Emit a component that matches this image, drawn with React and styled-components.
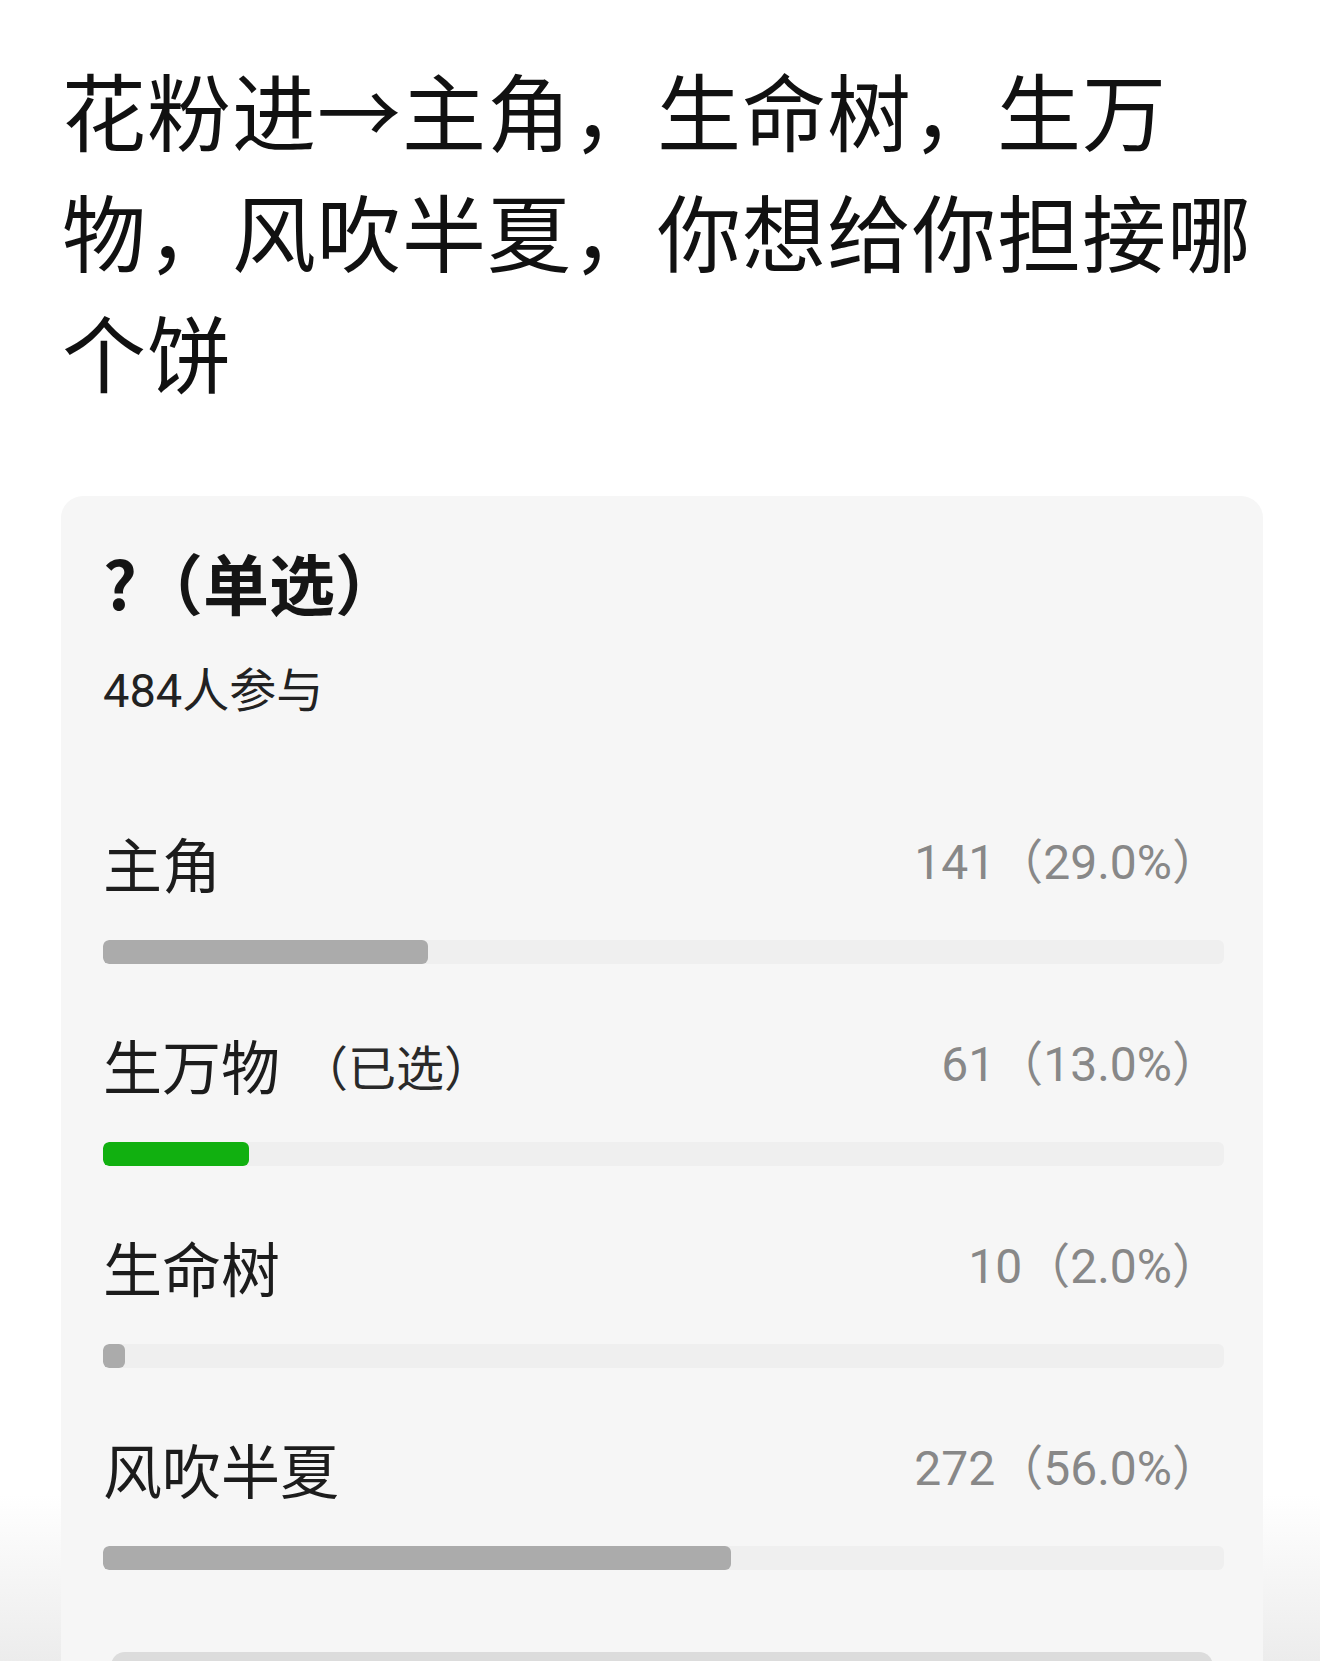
import React from 'react';
import styled, { createGlobalStyle } from 'styled-components';

const GlobalStyle = createGlobalStyle`
  html, body {
    margin: 0;
    padding: 0;
  }
  body {
    min-height: 1661px;
    background: linear-gradient(to bottom, #ffffff 0%, #ffffff 90%, #ececec 100%);
    font-family: Roboto, "Noto Sans CJK SC", sans-serif;
    color: #1a1a1a;
    overflow: hidden;
  }
`;

const options = [
  { label: '主角', count: 141, pct: 29.0 },
  { label: '生万物', count: 61, pct: 13.0, picked: true },
  { label: '生命树', count: 10, pct: 2.0 },
  { label: '风吹半夏', count: 272, pct: 56.0 },
];

const App = () => {
  return (
    <Page>
      <GlobalStyle />
      <Title>花粉进→主角，生命树，生万物，风吹半夏，你想给你担接哪个饼</Title>

      <Card>
        <Question>?（单选）</Question>
        <Joined>484人参与</Joined>

        <OptionList>
          {options.map((o) => (
            <Option key={o.label}>
              <OptionRow>
                <OptionLabel>
                  {o.label}
                  {o.picked ? <Picked>（已选）</Picked> : null}
                </OptionLabel>
                <Stat>{o.count}（{o.pct.toFixed(1)}%）</Stat>
              </OptionRow>
              <Track>
                <Fill $picked={o.picked} style={{ width: `${o.pct}%` }} />
              </Track>
            </Option>
          ))}
        </OptionList>

        <SubmitBar />
      </Card>
    </Page>
  );
};

export default App;

const Page = styled.div`
  width: 1320px;
  height: 1661px;
  padding-top: 48px;
  box-sizing: border-box;
`;

const Title = styled.h1`
  margin: 0;
  padding: 0 40px 0 62px;
  font-family: "Noto Sans CJK SC", sans-serif;
  font-size: 84px;
  font-weight: 400;
  line-height: 121px;
  letter-spacing: 1px;
  color: #111;
`;

const Card = styled.div`
  margin: 85px 57px 0 61px;
  padding: 45px 39px 0 42px;
  background: #f6f6f6;
  border-radius: 22px 22px 0 0;
  box-sizing: border-box;
`;

const Question = styled.div`
  font-family: "Noto Sans CJK SC", sans-serif;
  font-size: 66px;
  font-weight: 700;
  line-height: 80px;
  color: #151515;
`;

const Joined = styled.div`
  margin-top: 40px;
  font-family: Roboto, "Noto Sans CJK SC", sans-serif;
  font-size: 47px;
  line-height: 60px;
  color: #222;
`;

const OptionList = styled.div`
  margin-top: 107px;
  display: flex;
  flex-direction: column;
  gap: 66px;
`;

const Option = styled.div`
  display: flex;
  flex-direction: column;
  gap: 42px;
`;

const OptionRow = styled.div`
  display: flex;
  align-items: center;
  justify-content: space-between;
  height: 70px;
`;

const OptionLabel = styled.div`
  display: flex;
  align-items: center;
  font-family: "Noto Sans CJK SC", sans-serif;
  font-size: 59px;
  line-height: 70px;
  color: #1c1c1c;
`;

const Picked = styled.span`
  margin-left: 20px;
  font-size: 48px;
  color: #2a2a2a;
`;

const Stat = styled.div`
  margin-right: 4px;
  font-family: Roboto, "Noto Sans CJK SC", sans-serif;
  font-size: 48px;
  line-height: 70px;
  color: #888;
`;

const Track = styled.div`
  height: 24px;
  border-radius: 6px;
  background: #efefef;
  overflow: hidden;
`;

const Fill = styled.div`
  height: 100%;
  border-radius: 6px;
  background: ${(p) => (p.$picked ? '#11b010' : '#ababab')};
`;

const SubmitBar = styled.div`
  margin: 82px 11px 0 8px;
  height: 60px;
  border-radius: 14px;
  background: #dcdcdc;
`;
